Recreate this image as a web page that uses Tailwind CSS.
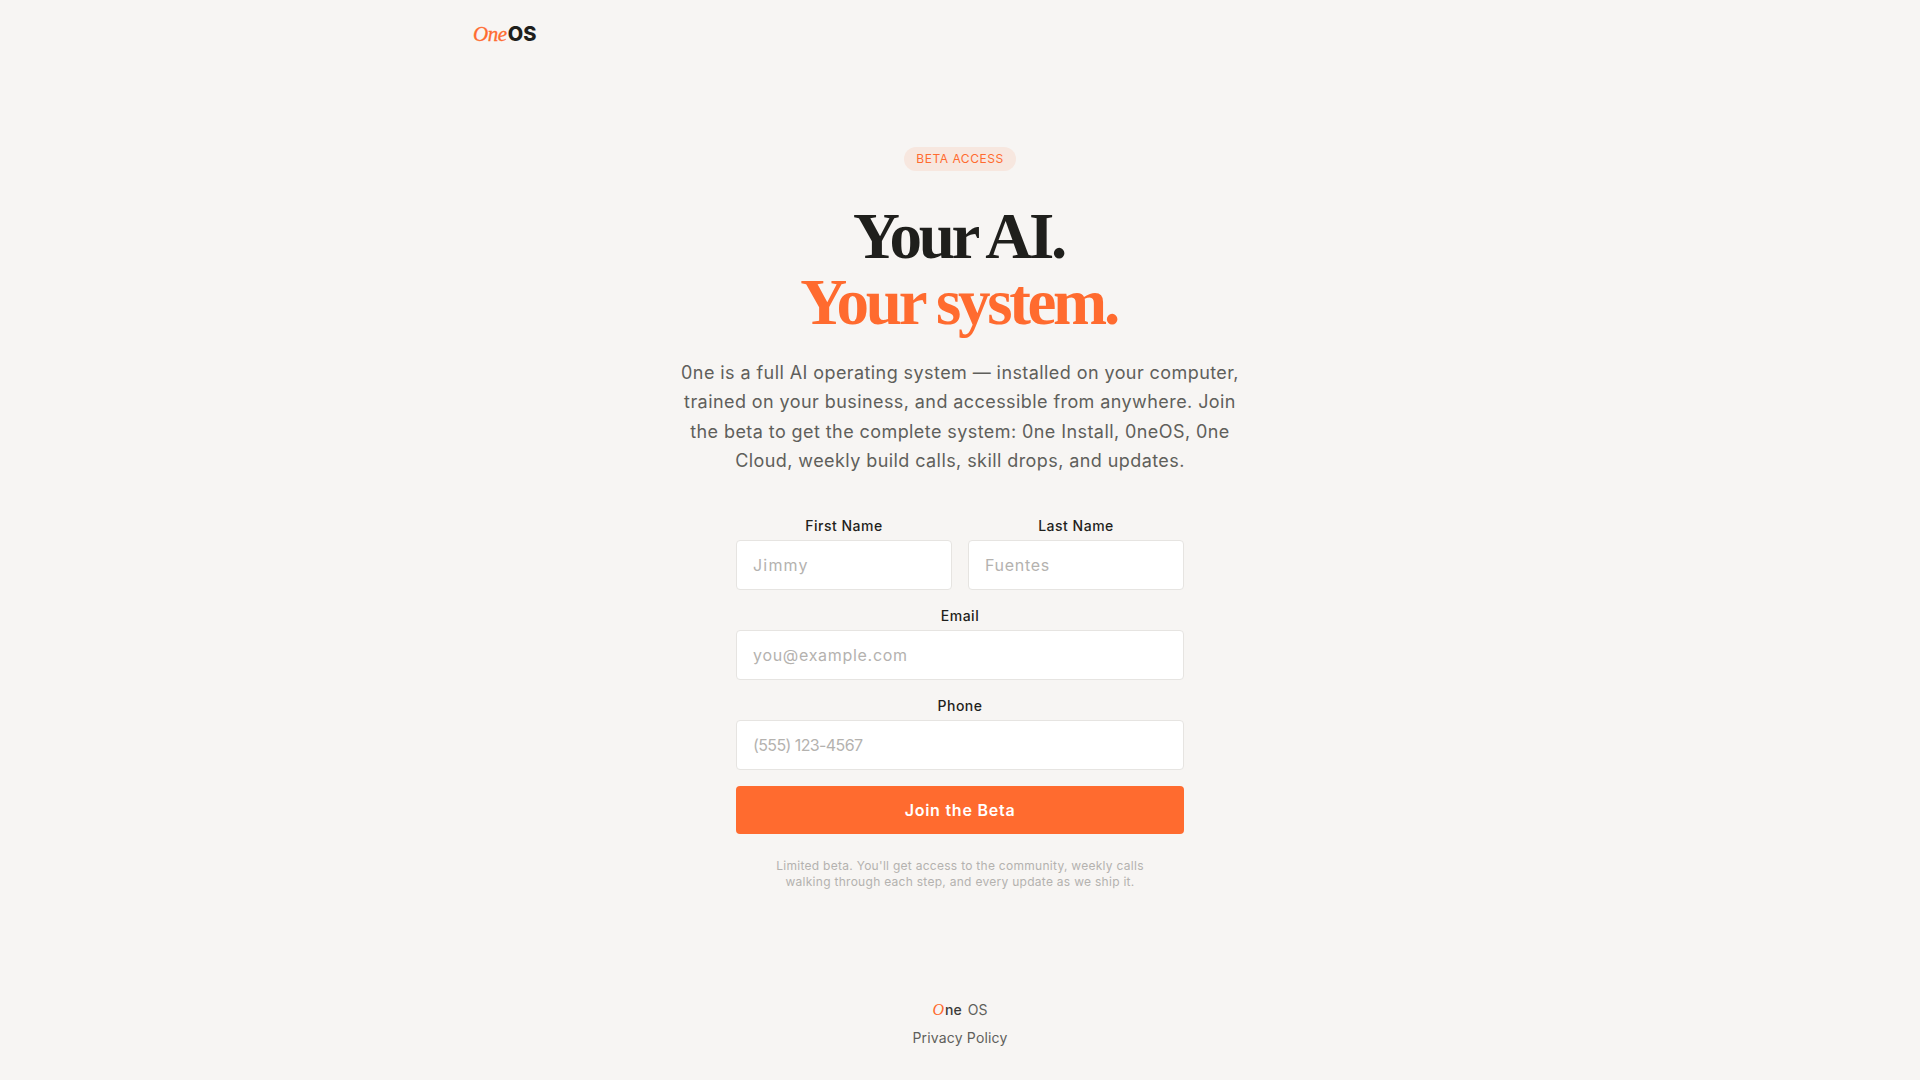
<!DOCTYPE html>
<html lang="en">
<head>
<meta charset="utf-8">
<title>OneOS Beta</title>
<script src="https://cdn.jsdelivr.net/npm/@tailwindcss/browser@4"></script>
</head>
<body class="bg-[#f7f5f3] font-['Inter','Liberation_Sans',sans-serif] text-[#1f1f1c] min-h-screen flex flex-col">
<header class="w-full max-w-5xl mx-auto px-6 h-[68px] flex items-center">
  <div class="flex items-baseline text-[20px] leading-none">
    <span class="font-['Liberation_Serif',serif] italic text-[21px] text-[#ff6b2f] tracking-[-0.4px] pl-[1px] [-webkit-text-stroke:0.3px_#ff6b2f]">One</span><span class="font-extrabold tracking-[0.1px] ml-[1px]">OS</span>
  </div>
</header>
<main class="flex-1 flex flex-col items-center pt-[79px]">
  <span class="h-6 w-28 rounded-full bg-[#ff6b2f]/10 text-[#ff6b2f] text-xs font-normal flex items-center justify-center uppercase tracking-[0.55px]">Beta Access</span>
  <h1 class="mt-[32px] pr-[3px] text-center font-['Liberation_Serif',serif] font-bold text-[65px] leading-[66px] tracking-[-3.3px]">
    <span class="block">Your AI.</span>
    <span class="block text-[#ff6b2f]">Your system.</span>
  </h1>
  <p class="mt-[23px] w-[576px] text-center text-lg leading-relaxed text-[#5f5f5b] tracking-[0.42px]">0ne is a full AI operating system — installed on your computer,<br>trained on your business, and accessible from anywhere. Join<br>the beta to get the complete system: 0ne Install, 0neOS, 0ne<br>Cloud, weekly build calls, skill drops, and updates.</p>
  <form class="mt-[41px] w-md flex flex-col gap-4">
    <div class="grid grid-cols-2 gap-4">
      <label class="flex flex-col gap-1 text-center text-sm font-medium tracking-[0.5px]">First Name
        <input class="h-[50px] px-4 rounded border border-[#e6e4e1] bg-white text-base font-normal placeholder:text-[#b4b2af] tracking-[1.2px]" placeholder="Jimmy">
      </label>
      <label class="flex flex-col gap-1 text-center text-sm font-medium tracking-[0.5px]">Last Name
        <input class="h-[50px] px-4 rounded border border-[#e6e4e1] bg-white text-base font-normal placeholder:text-[#b4b2af] tracking-[0.7px]" placeholder="Fuentes">
      </label>
    </div>
    <label class="flex flex-col gap-1 text-center text-sm font-medium tracking-[0.5px]">Email
      <input class="h-[50px] px-4 rounded border border-[#e6e4e1] bg-white text-base font-normal placeholder:text-[#b4b2af] tracking-[0.7px]" placeholder="you@example.com">
    </label>
    <label class="flex flex-col gap-1 text-center text-sm font-medium tracking-[0.5px]">Phone
      <input class="h-[50px] px-4 rounded border border-[#e6e4e1] bg-white text-base font-normal placeholder:text-[#b4b2af] tracking-[-0.6px]" placeholder="(555) 123-4567">
    </label>
    <button type="button" class="h-12 rounded bg-[#ff6b2f] text-white text-base font-semibold tracking-[0.75px]">Join the Beta</button>
  </form>
  <p class="mt-6 w-md px-4 text-center text-xs leading-4 text-[#b4b2af] tracking-[0.28px]">Limited beta. You'll get access to the community, weekly calls<br>walking through each step, and every update as we ship it.</p>
</main>
<footer class="flex flex-col items-center pb-[32px] gap-1.5">
  <div class="flex items-baseline text-sm leading-5 text-[#5f5f5b]">
    <span class="font-['Liberation_Serif',serif] italic text-[#ff6b2f] text-base pr-[1px]">O</span><span class="font-medium text-[#3a3a37]">ne</span><span class="ml-1.5">OS</span>
  </div>
  <a class="text-sm leading-5 text-[#5f5f5b] tracking-[0.17px]">Privacy Policy</a>
</footer>
</body>
</html>
